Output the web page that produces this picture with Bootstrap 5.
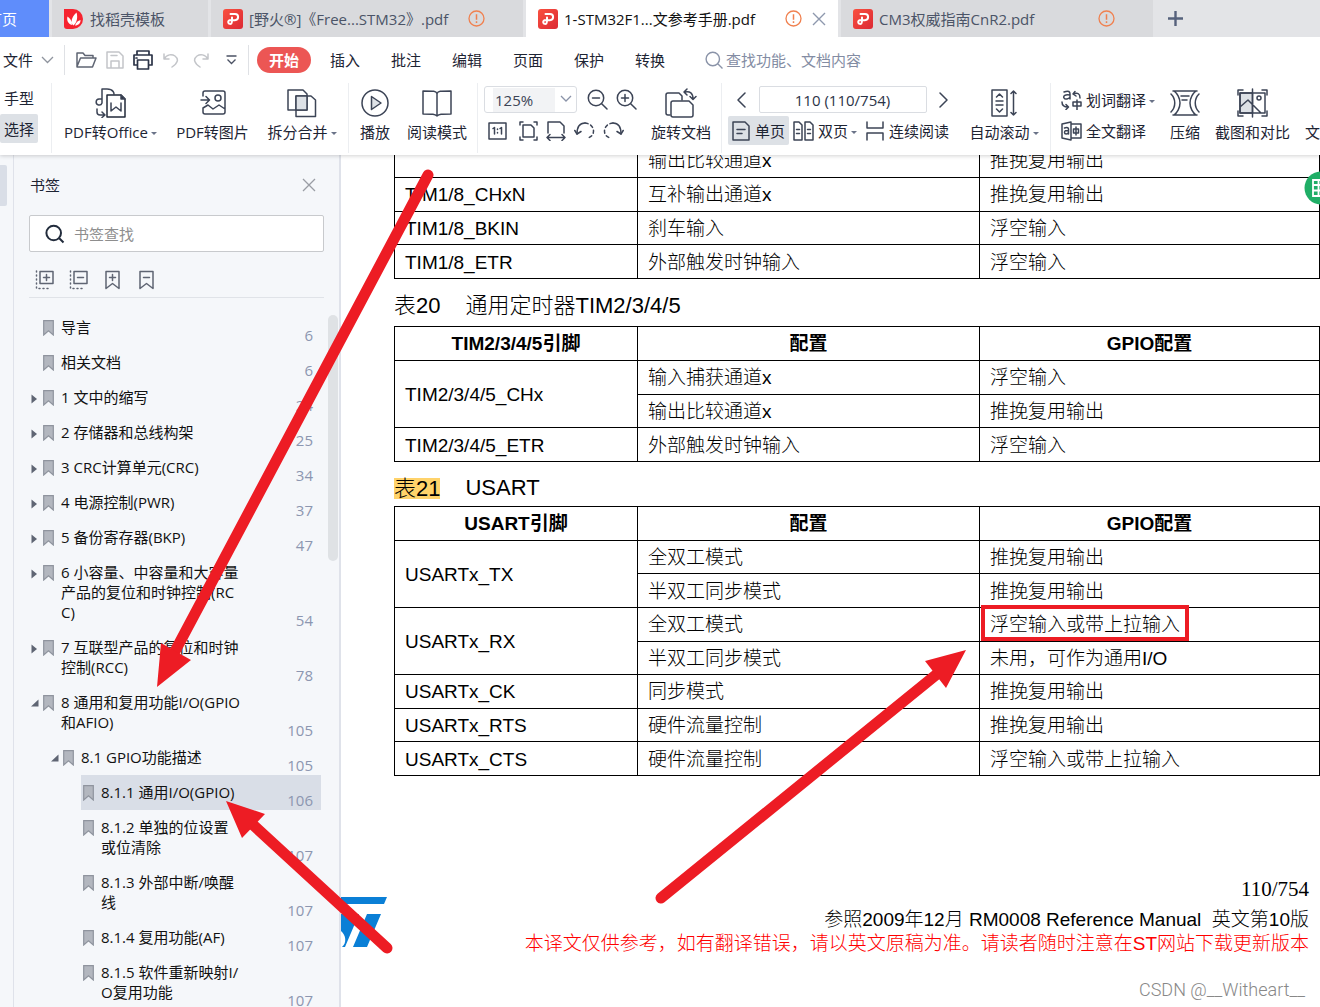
<!DOCTYPE html>
<html lang="zh-CN">
<head>
<meta charset="utf-8">
<meta name="viewport" content="width=device-width, initial-scale=1">
<title>1-STM32F1…文参考手册.pdf</title>
<link href="https://cdn.jsdelivr.net/npm/bootstrap@5.3.0/dist/css/bootstrap.min.css" rel="stylesheet">
<style>
:root { --ink:#2b3347; --muted:#8a93a8; --line:#e6e8ec; --red:#ed1c24; }
body { font-family:"Open Sans","Noto Sans CJK SC",sans-serif; font-size:15px; line-height:20px; color:#1d2433; }
.app { height:100vh; overflow:hidden; }
svg { display:block; flex:none; }
.ico { fill:none; stroke:#3c4456; stroke-width:1.5; stroke-linejoin:round; stroke-linecap:round; }
.app .btn { --bs-btn-padding-x:0; --bs-btn-padding-y:0; --bs-btn-border-width:0; --bs-btn-font-size:15px; --bs-btn-line-height:20px; --bs-btn-color:#1d2433; --bs-btn-border-radius:2px; white-space:nowrap; flex:none; }

/* document tabs */
.doc-tabs { height:37px; background:#e3e4e7; gap:3px; }
.doc-tab { background:#d9dadd; color:#4b5467; width:312px; padding:0 12px; gap:6px; flex:none; }
.doc-tab .title { flex:1; }
.doc-tab.home { width:49px; background:#5f8dfb; color:#fff; padding:0 32px 0 0; justify-content:flex-end; overflow:hidden; }
.doc-tab.short { width:156px; }
.doc-tab.current { background:#fff; color:#111; }
.warn { margin-right:26px; }
.current .warn { margin-right:4px; }

/* menu row */
.menu-row { height:46px; }
.menu-row .file { width:65px; padding-left:3px; border-right:1px solid #dfe1e5; height:30px; gap:8px; }
.quick { width:184px; height:30px; padding-left:11px; gap:9px; border-right:1px solid #dfe1e5; }
.menus { padding-left:8px; gap:31px; }
.app .start { background:#ec5654; color:#fff; font-weight:700; width:54px; height:26px; border-radius:13px; margin-right:-12px; }
.finder { color:var(--muted); margin-left:40px; gap:3px; }
.finder input { border:0; padding:0; width:170px; background:none; outline:0; }
.finder input::placeholder { color:#838ca3; opacity:1; }

/* ribbon */
.ribbon { height:72px; padding-bottom:2px; }
.ribbon-wrap { box-shadow:0 1px 4px rgba(0,0,0,.18); position:relative; z-index:2; }
.grp { border-right:1px solid #eceef1; padding:0 11px; gap:17px; flex:none; }
.grp.first { width:52px; padding:0 13px 0 0; }
.grp.reader { padding-right:10px; }
.grp.zoomer { padding-left:6px; padding-right:10px; gap:14px; }
.grp.pager { padding-left:6px; gap:20px; }
.grp.last { border:0; padding:0 0 0 10px; gap:15px; }
.tool { display:flex; flex-direction:column; align-items:center; gap:4px; padding-top:5px !important; height:64px; }
.w30 { width:30px; } .w60 { width:60px; } .w70 { width:70px; } .w75 { width:75px; } .w95 { width:95px; }
.caret::after { content:""; display:inline-block; border:3px solid transparent; border-top-color:#6a7388; border-bottom:0; margin-left:3px; vertical-align:3px; }
.two { gap:2px; padding-top:2px; }
.two > div, .two > .btn { height:29px; }
.on { background:#dde1e6 !important; }
.zoom-box { width:93px; height:27px; border:1px solid #dadde2; border-radius:3px; position:relative; margin-right:10px; }
.zoom-box select { appearance:none; border:0; background:#f2f3f5; width:62px; height:24px; margin-left:8px; padding:0 2px; color:#3c4456; outline:0; }
.zoom-box svg { position:absolute; right:4px; top:8px; }
.page-no { width:168px; height:27px; border:1px solid #dadde2; border-radius:2px; text-align:center; color:#2b3347; padding:0; }

/* side panel */
.rail { width:14px; background:#f5f7fa; border-right:1px solid #dfe2ea; padding-top:10px; flex:none; }
.rail span { display:block; width:7px; height:41px; background:#d9dee7; border-radius:0 2px 2px 0; }
.panel { width:327px; background:#f5f7fa; border-right:2px solid #dfe2ea; flex:none; overflow:hidden; position:relative; }
.panel-head { padding:20px 23px 20px 16px; }
.find-box { margin:0 15px; height:37px; background:#fff; border:1px solid #c8cacd; border-radius:2px; padding-left:15px; gap:9px; }
.find-box input { border:0; outline:0; background:none; padding:0; width:200px; }
.find-box input::placeholder { color:#8e8e8e; opacity:1; }
.marks { margin:0 15px; padding:18px 0 0 6px; height:46px; gap:14px; border-bottom:1px solid #e0e3e8; }
.tree { margin:12px 18px 0 14px; }
.tree li { display:flex; padding-left:13px; position:relative; }
.tree li.l1 { padding-left:33px; }
.tree li.l2 { padding-left:53px; }
.tree a { display:flex; flex:1; align-items:flex-start; color:#111; text-decoration:none; padding:7px 8px 8px 2px; gap:7px; white-space:nowrap; }
.tree a svg { margin-top:3px; }
.tree a b { margin-left:auto; align-self:flex-end; font-weight:400; color:#8c96b0; line-height:20px; margin-bottom:-8px; }
.tree .fold { position:absolute; margin-left:-10px; top:14px; border:0; padding:0; background:none; }
.tree .sel a { background:#d9dee7; }
.thumb { position:absolute; right:1px; top:160px; width:10px; height:246px; border-radius:5px; background:#dfe2e5; }

/* page */
.sheet { font-family:"Liberation Sans","Noto Sans CJK SC",sans-serif; font-size:19px; line-height:24px; color:#000; background:#fff; overflow:hidden; position:relative; padding-left:53px; }
.pins { width:926px; height:270px; border-collapse:collapse; table-layout:fixed; font-weight:300; }
.pins td, .pins th { border:1px solid #000; padding:2px 10px 0; line-height:24px; }
.pins th { text-align:center; font-weight:700; }
.pins col:nth-child(1) { width:243px; } .pins col:nth-child(2) { width:342px; }
.pins.four { height:136px; }
.pins.cut { margin-top:-12px; }
.cap { font-size:22px; height:47px; padding-top:6px; margin:0; font-weight:300; line-height:28px; display:flex; align-items:center; gap:25px; }
.cap.b { height:44px; padding-top:8px; }
.hit { background:#ffd36b; line-height:21px; }
.foot { text-align:right; margin-top:101px; padding-right:11px; font-weight:300; }
.foot div { height:24px; white-space:nowrap; }
.foot .num { font-family:"Liberation Serif",serif; font-size:21px; height:31px; }
.foot .note { color:#f00; }
.wm { font-family:Roboto,sans-serif; font-weight:300; font-size:18px; color:#888; text-align:right; padding:22px 15px 0 0; }
.st-logo { position:absolute; left:0; top:742px; }
.bubble { position:absolute; right:-18px; top:16px; }
.ink-layer { position:absolute; left:0; top:0; z-index:5; pointer-events:none; }
</style>
<script src="https://cdn.jsdelivr.net/npm/bootstrap@5.3.0/dist/js/bootstrap.bundle.min.js"></script>
</head>
<body>
<svg width="0" height="0" class="position-absolute">
  <defs>
    <linearGradient id="rg" x1="0" y1="0" x2="1" y2="1"><stop offset="0" stop-color="#f9503f"/><stop offset="1" stop-color="#dc2a35"/></linearGradient>
    <symbol id="pdf" viewBox="0 0 20 20"><rect width="20" height="20" rx="3" fill="url(#rg)"/><path d="M7.500 5H12a3.100 3.100 0 0 1 0 6.200H6.500a1.900 1.900 0 1 0 1.900 3.200q.6-1 .6-3.200V8.500" fill="none" stroke="#fff" stroke-width="2" stroke-linecap="round"/></symbol>
    <symbol id="warn" viewBox="0 0 17 17"><circle cx="8.500" cy="8.500" r="7.500" fill="none" stroke="#f0804f" stroke-width="1.300"/><path d="M8.500 4.200v5.600M8.500 11.300v1.600" stroke="#f0804f" stroke-width="1.500"/></symbol>
    <symbol id="bm" viewBox="0 0 11 16"><path d="M.7.7h9.600v14.300L5.500 10.800.7 15z" fill="#b3b7bf" stroke="#8f949e" stroke-width="1.200"/></symbol>
    <symbol id="shut" viewBox="0 0 7 10"><path d="M.5.500v9L6 5z" fill="#5f6573"/></symbol>
    <symbol id="open" viewBox="0 0 8 8"><path d="M7.500.5v7H0z" fill="#5f6573"/></symbol>
  </defs>
</svg>
<div class="app d-flex flex-column position-relative">
  <header class="ribbon-wrap bg-white">
    <nav class="doc-tabs d-flex">
      <div class="doc-tab home d-flex align-items-center"><span class="text-nowrap">首页</span></div>
      <div class="doc-tab short d-flex align-items-center">
        <svg width="20" height="20" viewBox="0 0 20 20"><path d="M0 0h9a10 10 0 0 1 0 20H3a3 3 0 0 1-3-3z" fill="#f6232f"/><path d="M9.500 16.500C6 14 7.500 8 12.500 3.500c1.500 5 .5 10-3 13zM8 16C4 15 2.500 11 3.500 7.500 6 9 8 12 8 16zM11 16.500c1-3 3-5 5.500-5.500.2 3-2 5.500-5.500 5.500z" fill="#fff"/></svg>
        <span class="title">找稻壳模板</span>
      </div>
      <div class="doc-tab d-flex align-items-center"><svg width="20" height="20"><use href="#pdf"/></svg><span class="title">[野火®]《Free...STM32》.pdf</span><svg class="warn" width="17" height="17"><use href="#warn"/></svg></div>
      <div class="doc-tab current d-flex align-items-center"><svg width="20" height="20"><use href="#pdf"/></svg><span class="title">1-STM32F1...文参考手册.pdf</span><svg class="warn" width="17" height="17"><use href="#warn"/></svg><button class="btn" aria-label="关闭"><svg width="14" height="14" viewBox="0 0 14 14"><path d="M1 1l12 12M13 1L1 13" stroke="#8e98ad" stroke-width="1.400"/></svg></button></div>
      <div class="doc-tab d-flex align-items-center"><svg width="20" height="20"><use href="#pdf"/></svg><span class="title">CM3权威指南CnR2.pdf</span><svg class="warn" width="17" height="17"><use href="#warn"/></svg></div>
      <button class="btn ms-2 ps-1 align-self-center" aria-label="新建"><svg width="15" height="15" viewBox="0 0 15 15"><path d="M7.500 0v15M0 7.500h15" stroke="#56617c" stroke-width="2.400"/></svg></button>
    </nav>

    <div class="menu-row d-flex align-items-center">
      <button class="btn file d-flex align-items-center rounded-0">文件<svg width="13" height="8" viewBox="0 0 13 8"><path d="M1 1l5.500 5.500L12 1" fill="none" stroke="#8f949e" stroke-width="1.300"/></svg></button>
      <div class="quick d-flex align-items-center">
        <button class="btn" aria-label="打开"><svg class="ico" width="21" height="18" viewBox="0 0 21 18"><path d="M1 15.500V2h6l2 2.500h8V7M1 15.500L4.500 7H20l-3.500 9H1z" stroke="#5f6573"/></svg></button>
        <button class="btn" aria-label="保存"><svg class="ico" width="18" height="18" viewBox="0 0 18 18"><path d="M1 1h12l4 4v12H1zM5 17v-7h8v7M5 4.500h6" stroke="#c3c5c9"/></svg></button>
        <button class="btn" aria-label="打印"><svg class="ico" width="20" height="20" viewBox="0 0 20 20"><path d="M4 5V1h12v4M4 15H1V5h18v10h-3M4.500 10h11v9h-11zM3 8h1" stroke="#2b3347" stroke-width="1.700"/></svg></button>
        <button class="btn" aria-label="撤销"><svg class="ico" width="18" height="16" viewBox="0 0 18 16"><path d="M2 2v5h5M2 7c3-5 8-5 11-3 4 3 3 7-3 11" stroke="#c3c5c9"/></svg></button>
        <button class="btn ms-1" aria-label="重做"><svg class="ico" width="16" height="16" viewBox="0 0 16 16"><path d="M15 2v5h-5M15 7C12 2 7 2 4 4c-4 3-3 7 3 11" stroke="#c3c5c9"/></svg></button>
        <button class="btn ms-2" aria-label="更多"><svg width="11" height="10" viewBox="0 0 11 10"><path d="M.5 1h10M1.500 4.500l4 4 4-4" fill="none" stroke="#4b5264" stroke-width="1.300"/></svg></button>
      </div>
      <div class="menus d-flex align-items-center">
        <button class="btn start">开始</button><button class="btn">插入</button><button class="btn">批注</button><button class="btn">编辑</button><button class="btn">页面</button><button class="btn">保护</button><button class="btn">转换</button>
      </div>
      <label class="finder d-flex align-items-center"><svg width="18" height="18" viewBox="0 0 18 18"><path d="M13 13l4.500 4.500M14.500 8A6.700 6.700 0 1 1 1.100 8a6.700 6.700 0 0 1 13.400 0z" fill="none" stroke="#8a93a8" stroke-width="1.400"/></svg><input type="text" placeholder="查找功能、文档内容" aria-label="查找功能"></label>
    </div>

    <div class="ribbon d-flex overflow-hidden">
      <div class="grp first d-flex flex-column two">
        <button class="btn">手型</button><button class="btn on">选择</button>
      </div>
      <div class="grp d-flex">
        <button class="btn tool w95"><svg class="ico" width="32" height="30" viewBox="0 0 32 30"><path d="M7 7V1h5c7 0 7 5 7 5M7 11H4a3 3 0 1 0 3 4V7M2 21v3c0 2 1 3 3 3h4M7 24l3 3-3 2.500"/><path d="M12 7h14l4 4v18H12z" fill="#fff" stroke="#222a3a"/><path d="M26 7v4h4z" fill="#222a3a"/><path d="M16 15v8l5-4 5 4v-8"/></svg><span class="caret">PDF转Office</span></button>
        <button class="btn tool w75"><svg class="ico" width="26" height="30" viewBox="0 0 26 30"><path d="M3 8V5a2 2 0 0 1 2-2h18a2 2 0 0 1 2 2v19a2 2 0 0 1-2 2H5a2 2 0 0 1-2-2v-4l5-3 5 4 6-4 6 4M1 12h8M6 8.500l3.500 3.500L6 15.500"/><circle cx="18" cy="10" r="3"/></svg>PDF转图片</button>
        <button class="btn tool w70"><svg class="ico" width="30" height="30" viewBox="0 0 30 30"><path d="M1 2h15l4 4v16H1z"/><path d="M9 8h15l4.500 4v16.500H9z"/><path d="M9 8h11v14H9z" fill="#dde1e6"/></svg><span class="caret">拆分合并</span></button>
      </div>
      <div class="grp reader d-flex">
        <button class="btn tool w30"><svg class="ico" width="30" height="30" viewBox="0 0 30 30"><circle cx="15" cy="15" r="13"/><path d="M11.500 8.500L21 15l-9.500 6.500z" fill="#dde1e6"/></svg>播放</button>
        <button class="btn tool w60"><svg class="ico" width="30" height="30" viewBox="0 0 30 30"><path d="M15 5.500C14 3 12 3 1 3v23c10 0 12 0 14 2 2-2 4-2 14-2V3c-11 0-13 0-14 2.500zM15 5.500V28"/></svg>阅读模式</button>
      </div>
      <div class="grp zoomer d-flex">
        <div class="two d-flex flex-column">
          <div class="d-flex align-items-center">
            <div class="zoom-box d-flex align-items-center"><select aria-label="缩放比例"><option>125%</option></select><svg width="12" height="8" viewBox="0 0 12 8"><path d="M1 1l5 5 5-5" fill="none" stroke="#8a93a8" stroke-width="1.300"/></svg></div>
            <button class="btn me-2" aria-label="缩小"><svg class="ico" width="21" height="21" viewBox="0 0 21 21"><circle cx="9" cy="9" r="7.700"/><path d="M14.700 14.700l5.300 5.300M5.500 9h7"/></svg></button>
            <button class="btn" aria-label="放大"><svg class="ico" width="21" height="21" viewBox="0 0 21 21"><circle cx="9" cy="9" r="7.700"/><path d="M14.700 14.700l5.300 5.300M5.500 9h7M9 5.500v7"/></svg></button>
          </div>
          <div class="d-flex align-items-center gap-2 ps-1">
            <button class="btn" aria-label="实际大小"><svg class="ico" width="19" height="18" viewBox="0 0 19 18"><path d="M1 1h17v16H1zM5 6.500L6.500 5.500V12M12 6.500l1.500-1V12M9.500 7v.5M9.500 10.500v.5"/></svg></button>
            <button class="btn ms-1" aria-label="适合页面"><svg class="ico" width="19" height="20" viewBox="0 0 19 20"><path d="M4 4h8l3 3v9H4zM1 4V1h3M15 1h3v3M1 16v3h3M18 16v3h-3"/></svg></button>
            <button class="btn" aria-label="适合宽度"><svg class="ico" width="20" height="20" viewBox="0 0 20 20"><path d="M2 12V1h12l4 4v7M1 16.500h18M4 13.500l-3 3 3 3M16 13.500l3 3-3 3"/></svg></button>
            <button class="btn" aria-label="向左旋转"><svg class="ico" width="21" height="20" viewBox="0 0 21 20"><path d="M3 13C3 6 6 2 11 2"/><path d="M11 2c11 1 11 14 2 15" stroke-dasharray="3 3"/><path d="M.8 9.500L3 13l4-2.500"/></svg></button>
            <button class="btn" aria-label="向右旋转"><svg class="ico" width="21" height="20" viewBox="0 0 21 20"><path d="M18 13c0-7-3-11-8-11"/><path d="M10 2C-1 3-1 16 8 17" stroke-dasharray="3 3"/><path d="M20.200 9.500L18 13l-4-2.500"/></svg></button>
          </div>
        </div>
        <button class="btn tool w60"><svg class="ico" width="32" height="30" viewBox="0 0 32 30"><path d="M5 27H3a2 2 0 0 1-2-2V7a2 2 0 0 1 2-2h11l3 3v4"/><path d="M8 13h16l4 4v10a2 2 0 0 1-2 2H8a2 2 0 0 1-2-2V15a2 2 0 0 1 2-2z"/><path d="M20 4c5-1 8 1 8 7M22 1l-3 3 3 3M25 8.500l3 3 3-3"/></svg>旋转文档</button>
      </div>
      <div class="grp pager d-flex">
        <div class="two d-flex flex-column">
          <div class="d-flex align-items-center justify-content-between ps-2">
            <button class="btn" aria-label="上一页"><svg class="ico" width="10" height="16" viewBox="0 0 10 16"><path d="M9 1L2 8l7 7"/></svg></button>
            <input class="page-no" type="text" value="110 (110/754)" aria-label="页码">
            <button class="btn" aria-label="下一页"><svg class="ico" width="10" height="16" viewBox="0 0 10 16"><path d="M1 1l7 7-7 7"/></svg></button>
          </div>
          <div class="d-flex align-items-stretch">
            <button class="btn on d-flex align-items-center px-1 gap-1 me-1"><svg class="ico" width="19" height="20" viewBox="0 0 19 20"><path d="M1 1h12l4 4v14H1zM5 8.500h8M5 12.500h5"/></svg>单页</button>
            <button class="btn d-flex align-items-center gap-1 me-2"><svg class="ico" width="21" height="20" viewBox="0 0 21 20"><path d="M1 1h5l3 3v15H1zM12 1h5l3 3v15h-8zM3.500 8.500h3M3.500 12.500h3M14.500 8.500h3M14.500 12.500h3"/></svg><span class="caret">双页</span></button>
            <button class="btn d-flex align-items-center gap-1"><svg class="ico" width="20" height="20" viewBox="0 0 20 20"><path d="M2 1v6h16V1M2 19v-7h16v7M2 9.500"/></svg>连续阅读</button>
          </div>
        </div>
        <button class="btn tool w70"><svg class="ico" width="26" height="30" viewBox="0 0 26 30"><path d="M1 2h15v26H1zM5.500 9L8.500 6l3 3M5.500 21l3 3 3-3M5 13h7M5 17h7M22.500 3v24M20 5.500L22.500 3 25 5.500M20 24.500l2.500 2.500 2.500-2.500"/></svg><span class="caret">自动滚动</span></button>
      </div>
      <div class="grp last d-flex">
        <div class="two d-flex flex-column">
          <button class="btn d-flex align-items-center gap-1"><svg class="ico" width="21" height="20" viewBox="0 0 21 20"><path d="M3 2c5-2 6 0 6 2v5M9 5C4 4 2 6 3 8s5 1 6-1M12 4c5-2 7 0 7 4M14 1.500L12 4l3 2M1 12c0 4 2 5 6 5M5 14.500L7.500 17 5 19.500M12 12h8v4h-8zM16 10v10"/></svg><span class="caret">划词翻译</span></button>
          <button class="btn d-flex align-items-center gap-1"><svg class="ico" width="21" height="20" viewBox="0 0 21 20"><path d="M1 3l9-2v18l-9-2zM10 3h10v14H10M3.500 7c3-1 4 0 4 1v5M7.500 9.500c-3 0-4 0-4 2s3 2 4 0M12.500 8h5v4h-5zM15 6v8"/></svg>全文翻译</button>
        </div>
        <button class="btn tool w30"><svg class="ico" width="30" height="30" viewBox="0 0 30 30"><path d="M3 3h24M3 27h24M4 3c3 2 6 7 6 12s-3 10-6 12M26 3c-3 2-6 7-6 12s3 10 6 12M1 6c5 5 5 13 0 18M29 6c-5 5-5 13 0 18M11 8h8M12 12h5"/></svg>压缩</button>
        <button class="btn tool w75"><svg class="ico" width="31" height="30" viewBox="0 0 31 30"><path d="M3 5h12.500v20H3z" fill="#dde1e6"/><path d="M3 5h25v20H3zM1 7V2h5M25 2h5v5M1 23v5h5M25 28h5v-5M15.500 1v28M3 19l8-7 13 13"/><circle cx="22" cy="10" r="2"/></svg>截图和对比</button>
        <button class="btn tool w30">
          <svg class="ico" width="30" height="30"></svg>文档</button>
      </div>
    </div>
  </header>

  <main class="d-flex flex-grow-1 overflow-hidden">
    <div class="rail"><span></span></div>
    <aside class="panel">
      <div class="panel-head d-flex justify-content-between align-items-center">书签<button class="btn" aria-label="关闭书签"><svg width="14" height="14" viewBox="0 0 14 14"><path d="M1 1l12 12M13 1L1 13" stroke="#9a9da4" stroke-width="1.300"/></svg></button></div>
      <label class="find-box d-flex align-items-center"><svg width="20" height="20" viewBox="0 0 20 20"><path d="M14 14l4.500 4.500M16 9A7.300 7.300 0 1 1 1.400 9 7.300 7.300 0 0 1 16 9z" fill="none" stroke="#222c3c" stroke-width="2"/></svg><input type="text" placeholder="书签查找" aria-label="书签查找"></label>
      <div class="marks d-flex">
        <button class="btn align-self-start" aria-label="展开"><svg class="ico" width="20" height="20" viewBox="0 0 20 20"><path d="M5 1.500h13v12H5zM8.500 7.500h6M11.500 4.500v6" stroke="#5f6573"/><path d="M1.500 1v17.500H16" stroke="#5f6573" stroke-dasharray="1 3"/></svg></button>
        <button class="btn align-self-start" aria-label="收起"><svg class="ico" width="20" height="20" viewBox="0 0 20 20"><path d="M5 1.500h13v12H5zM8.500 7.500h6" stroke="#5f6573"/><path d="M1.500 1v17.500H16" stroke="#5f6573" stroke-dasharray="1 3"/></svg></button>
        <button class="btn align-self-start" aria-label="添加书签"><svg class="ico" width="20" height="20" viewBox="0 0 20 20"><path d="M3 1.500h13v17l-6.500-5-6.500 5zM6.500 7.500h6M9.500 4.500v6" stroke="#5f6573"/></svg></button>
        <button class="btn align-self-start" aria-label="删除书签"><svg class="ico" width="20" height="20" viewBox="0 0 20 20"><path d="M3 1.500h13v17l-6.500-5-6.500 5zM6.500 7.500h6" stroke="#5f6573"/></svg></button>
      </div>
      <ul class="tree list-unstyled mb-0">
        <li><a href="#"><svg width="11" height="16"><use href="#bm"/></svg><span>导言</span><b>6</b></a></li>
        <li><a href="#"><svg width="11" height="16"><use href="#bm"/></svg><span>相关文档</span><b>6</b></a></li>
        <li><button class="fold" aria-label="展开"><svg width="7" height="10"><use href="#shut"/></svg></button><a href="#"><svg width="11" height="16"><use href="#bm"/></svg><span>1 文中的缩写</span><b>24</b></a></li>
        <li><button class="fold" aria-label="展开"><svg width="7" height="10"><use href="#shut"/></svg></button><a href="#"><svg width="11" height="16"><use href="#bm"/></svg><span>2 存储器和总线构架</span><b>25</b></a></li>
        <li><button class="fold" aria-label="展开"><svg width="7" height="10"><use href="#shut"/></svg></button><a href="#"><svg width="11" height="16"><use href="#bm"/></svg><span>3 CRC计算单元(CRC)</span><b>34</b></a></li>
        <li><button class="fold" aria-label="展开"><svg width="7" height="10"><use href="#shut"/></svg></button><a href="#"><svg width="11" height="16"><use href="#bm"/></svg><span>4 电源控制(PWR)</span><b>37</b></a></li>
        <li><button class="fold" aria-label="展开"><svg width="7" height="10"><use href="#shut"/></svg></button><a href="#"><svg width="11" height="16"><use href="#bm"/></svg><span>5 备份寄存器(BKP)</span><b>47</b></a></li>
        <li><button class="fold" aria-label="展开"><svg width="7" height="10"><use href="#shut"/></svg></button><a href="#"><svg width="11" height="16"><use href="#bm"/></svg><span>6 小容量、中容量和大容量<br>产品的复位和时钟控制(RC<br>C)</span><b>54</b></a></li>
        <li><button class="fold" aria-label="展开"><svg width="7" height="10"><use href="#shut"/></svg></button><a href="#"><svg width="11" height="16"><use href="#bm"/></svg><span>7 互联型产品的复位和时钟<br>控制(RCC)</span><b>78</b></a></li>
        <li><button class="fold" aria-label="收起"><svg width="8" height="8"><use href="#open"/></svg></button><a href="#"><svg width="11" height="16"><use href="#bm"/></svg><span>8 通用和复用功能I/O(GPIO<br>和AFIO)</span><b>105</b></a></li>
        <li class="l1"><button class="fold" aria-label="收起"><svg width="8" height="8"><use href="#open"/></svg></button><a href="#"><svg width="11" height="16"><use href="#bm"/></svg><span>8.1 GPIO功能描述</span><b>105</b></a></li>
        <li class="l2 sel"><a href="#"><svg width="11" height="16"><use href="#bm"/></svg><span>8.1.1 通用I/O(GPIO)</span><b>106</b></a></li>
        <li class="l2"><a href="#"><svg width="11" height="16"><use href="#bm"/></svg><span>8.1.2 单独的位设置<br>或位清除</span><b>107</b></a></li>
        <li class="l2"><a href="#"><svg width="11" height="16"><use href="#bm"/></svg><span>8.1.3 外部中断/唤醒<br>线</span><b>107</b></a></li>
        <li class="l2"><a href="#"><svg width="11" height="16"><use href="#bm"/></svg><span>8.1.4 复用功能(AF)</span><b>107</b></a></li>
        <li class="l2"><a href="#"><svg width="11" height="16"><use href="#bm"/></svg><span>8.1.5 软件重新映射I/<br>O复用功能</span><b>107</b></a></li>
      </ul>
      <div class="thumb"></div>
    </aside>

    <section class="sheet flex-grow-1">
      <table class="pins four cut">
        <colgroup><col><col><col></colgroup>
        <tr><td></td><td>输出比较通道x</td><td>推挽复用输出</td></tr>
        <tr><td>TIM1/8_CHxN</td><td>互补输出通道x</td><td>推挽复用输出</td></tr>
        <tr><td>TIM1/8_BKIN</td><td>刹车输入</td><td>浮空输入</td></tr>
        <tr><td>TIM1/8_ETR</td><td>外部触发时钟输入</td><td>浮空输入</td></tr>
      </table>
      <h2 class="cap"><span>表20</span><span>通用定时器TIM2/3/4/5</span></h2>
      <table class="pins four">
        <colgroup><col><col><col></colgroup>
        <tr><th>TIM2/3/4/5引脚</th><th>配置</th><th>GPIO配置</th></tr>
        <tr><td rowspan="2">TIM2/3/4/5_CHx</td><td>输入捕获通道x</td><td>浮空输入</td></tr>
        <tr><td>输出比较通道x</td><td>推挽复用输出</td></tr>
        <tr><td>TIM2/3/4/5_ETR</td><td>外部触发时钟输入</td><td>浮空输入</td></tr>
      </table>
      <h2 class="cap b"><span class="hit">表21</span><span>USART</span></h2>
      <table class="pins">
        <colgroup><col><col><col></colgroup>
        <tr><th>USART引脚</th><th>配置</th><th>GPIO配置</th></tr>
        <tr><td rowspan="2">USARTx_TX</td><td>全双工模式</td><td>推挽复用输出</td></tr>
        <tr><td>半双工同步模式</td><td>推挽复用输出</td></tr>
        <tr><td rowspan="2">USARTx_RX</td><td>全双工模式</td><td>浮空输入或带上拉输入</td></tr>
        <tr><td>半双工同步模式</td><td>未用，可作为通用I/O</td></tr>
        <tr><td>USARTx_CK</td><td>同步模式</td><td>推挽复用输出</td></tr>
        <tr><td>USARTx_RTS</td><td>硬件流量控制</td><td>推挽复用输出</td></tr>
        <tr><td>USARTx_CTS</td><td>硬件流量控制</td><td>浮空输入或带上拉输入</td></tr>
      </table>
      <footer class="foot">
        <div class="num">110/754</div>
        <div>参照2009年12月 RM0008 Reference Manual&nbsp; 英文第10版</div>
        <div class="note">本译文仅供参考，如有翻译错误，请以英文原稿为准。请读者随时注意在ST网站下载更新版本</div>
      </footer>
      <div class="wm">CSDN @__Witheart__</div>
      <svg class="st-logo" width="46" height="52" viewBox="0 0 46 52"><g fill="#0a7fd6"><path d="M0 0h46l-3 7H0z"/><path d="M0 17h18L4 50H1c5-4 4-12-1-16zM26 17h14L26 50H12z"/></g></svg>
      <svg class="bubble" width="34" height="34" viewBox="0 0 34 34"><circle cx="17" cy="17" r="16.500" fill="#1fae66"/><path d="M9 9h16v16H9zM9 14h16M9 19.500h16M14.500 9v16" fill="none" stroke="#fff" stroke-width="1.800"/></svg>
    </section>
  </main>

  <svg class="ink-layer" width="1320" height="1007" viewBox="0 0 1320 1007">
    <g stroke="#ed1c24" stroke-width="11" stroke-linecap="round" fill="none"><path d="M428 175L173 655M387 948L250 822M661 898L942 670"/><rect x="983" y="607" width="204" height="32" stroke-width="4"/></g>
    <g fill="#ed1c24"><path d="M157 687L161 643 191 660zM226 801L265 814 242 838zM966 650L925 661 946 688z"/></g>
  </svg>
</div>
</body>
</html>
